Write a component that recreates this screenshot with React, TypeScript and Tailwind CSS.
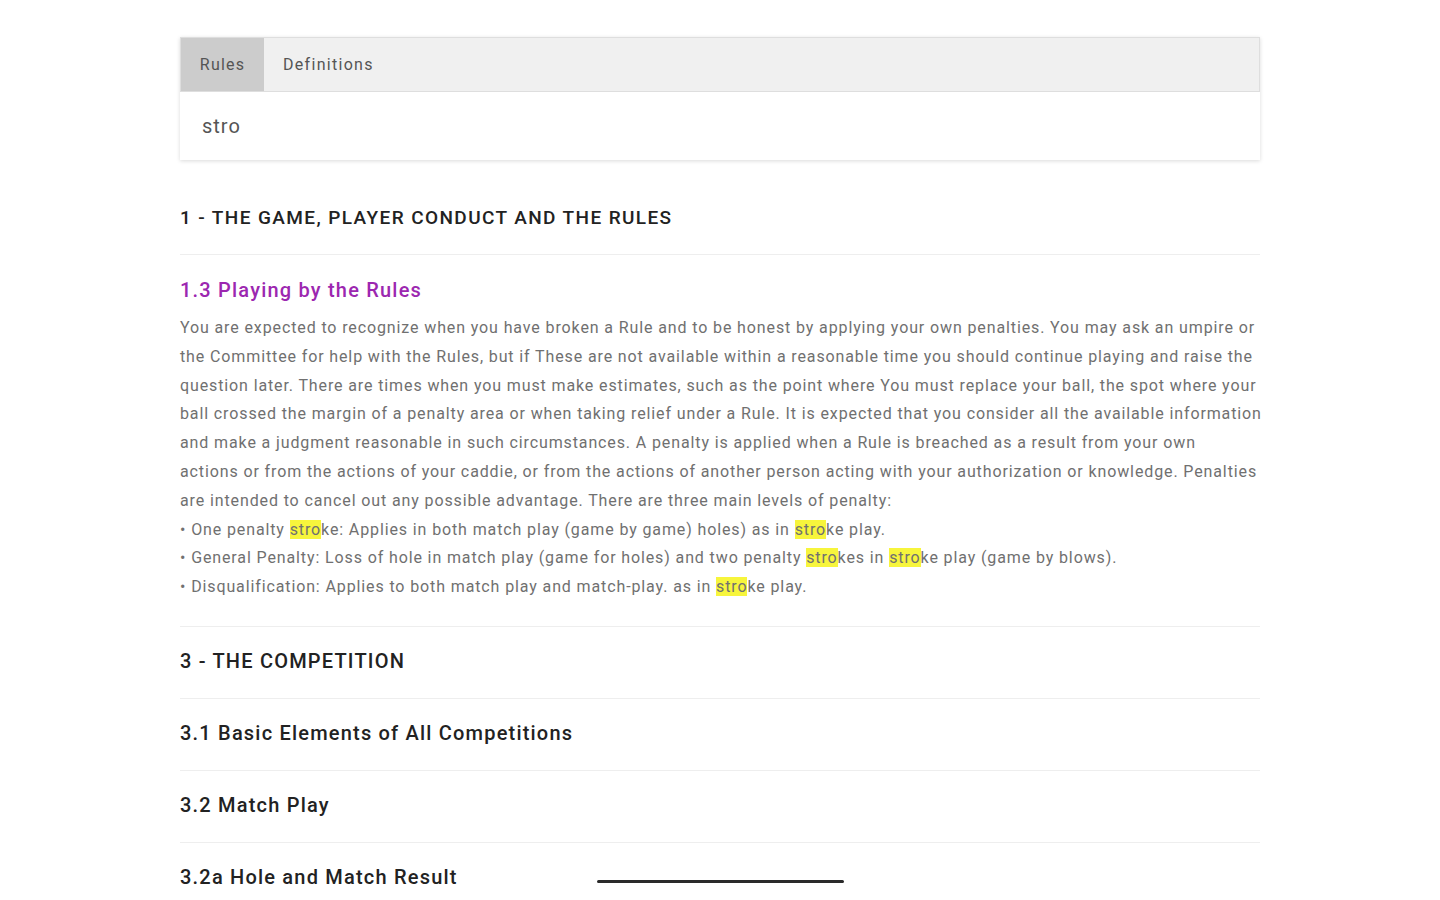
import React from 'react';

const Hl: React.FC<{ children: React.ReactNode }> = ({ children }) => (
    <span className="bg-[#f7f53c]">{children}</span>
);

const rows = ['3 - THE COMPETITION', '3.1 Basic Elements of All Competitions', '3.2 Match Play', '3.2a Hole and Match Result', '3.2b Concessions'];

// lines broken as the reference wraps them
const para = [
    'You are expected to recognize when you have broken a Rule and to be honest by applying your own penalties. You may ask an umpire or',
    'the Committee for help with the Rules, but if These are not available within a reasonable time you should continue playing and raise the',
    'question later. There are times when you must make estimates, such as the point where You must replace your ball, the spot where your',
    'ball crossed the margin of a penalty area or when taking relief under a Rule. It is expected that you consider all the available information',
    'and make a judgment reasonable in such circumstances. A penalty is applied when a Rule is breached as a result from your own',
    'actions or from the actions of your caddie, or from the actions of another person acting with your authorization or knowledge. Penalties',
    'are intended to cancel out any possible advantage. There are three main levels of penalty:',
];

const App: React.FC = () => {
    return (
        <div className="min-h-screen bg-white font-['Roboto',sans-serif] overflow-hidden">
            <div className="w-[1080px] mx-auto pt-[37px]">
                {/* tabs + search */}
                <div className="shadow-[0_1px_4px_rgba(0,0,0,0.15)]">
                    <div className="flex h-[55px] bg-[#f0f0f0] border border-[#dedede]">
                        <div className="w-[83px] bg-[#cccccc] flex items-center justify-center text-[16px] tracking-[1.2px] text-[#555]">Rules</div>
                        <div className="px-[19px] flex items-center text-[16px] tracking-[1.3px] text-[#555]">Definitions</div>
                    </div>
                    <div className="h-[68px] flex items-center px-[22px] text-[20px] tracking-[1px] text-[#555]">stro</div>
                </div>

                <div className="mt-[22px] h-[73px] flex items-center border-b border-[#eeeeee] text-[19px] font-medium text-[#222] tracking-[1.4px]">
                    1 - THE GAME, PLAYER CONDUCT AND THE RULES
                </div>

                <div className="pt-[21px] pb-[24px] border-b border-[#eeeeee]">
                    <h3 className="text-[20px] leading-[28px] font-medium text-[#9c27b0] tracking-[1.2px] mb-[10px]">1.3 Playing by the Rules</h3>
                    <div className="text-[16px] leading-[28.8px] tracking-[0.88px] text-[#707070]">
                        {para.map((l, i) => (
                            <div key={i} className="whitespace-nowrap">{l}</div>
                        ))}
                        <div className="whitespace-nowrap">• One penalty <Hl>stro</Hl>ke: Applies in both match play (game by game) holes) as in <Hl>stro</Hl>ke play.</div>
                        <div className="whitespace-nowrap">• General Penalty: Loss of hole in match play (game for holes) and two penalty <Hl>stro</Hl>kes in <Hl>stro</Hl>ke play (game by blows).</div>
                        <div className="whitespace-nowrap">• Disqualification: Applies to both match play and match-play. as in <Hl>stro</Hl>ke play.</div>
                    </div>
                </div>

                {rows.map(r => (
                    <div key={r} className="h-[72px] pb-[3px] flex items-center border-b border-[#eeeeee] text-[20px] font-medium text-[#222] tracking-[1.2px]">
                        {r}
                    </div>
                ))}
            </div>

            <div className="fixed left-[597px] top-[880px] w-[247px] h-[3px] rounded-full bg-[#2a2a2a]" />
        </div>
    );
};

export default App;
